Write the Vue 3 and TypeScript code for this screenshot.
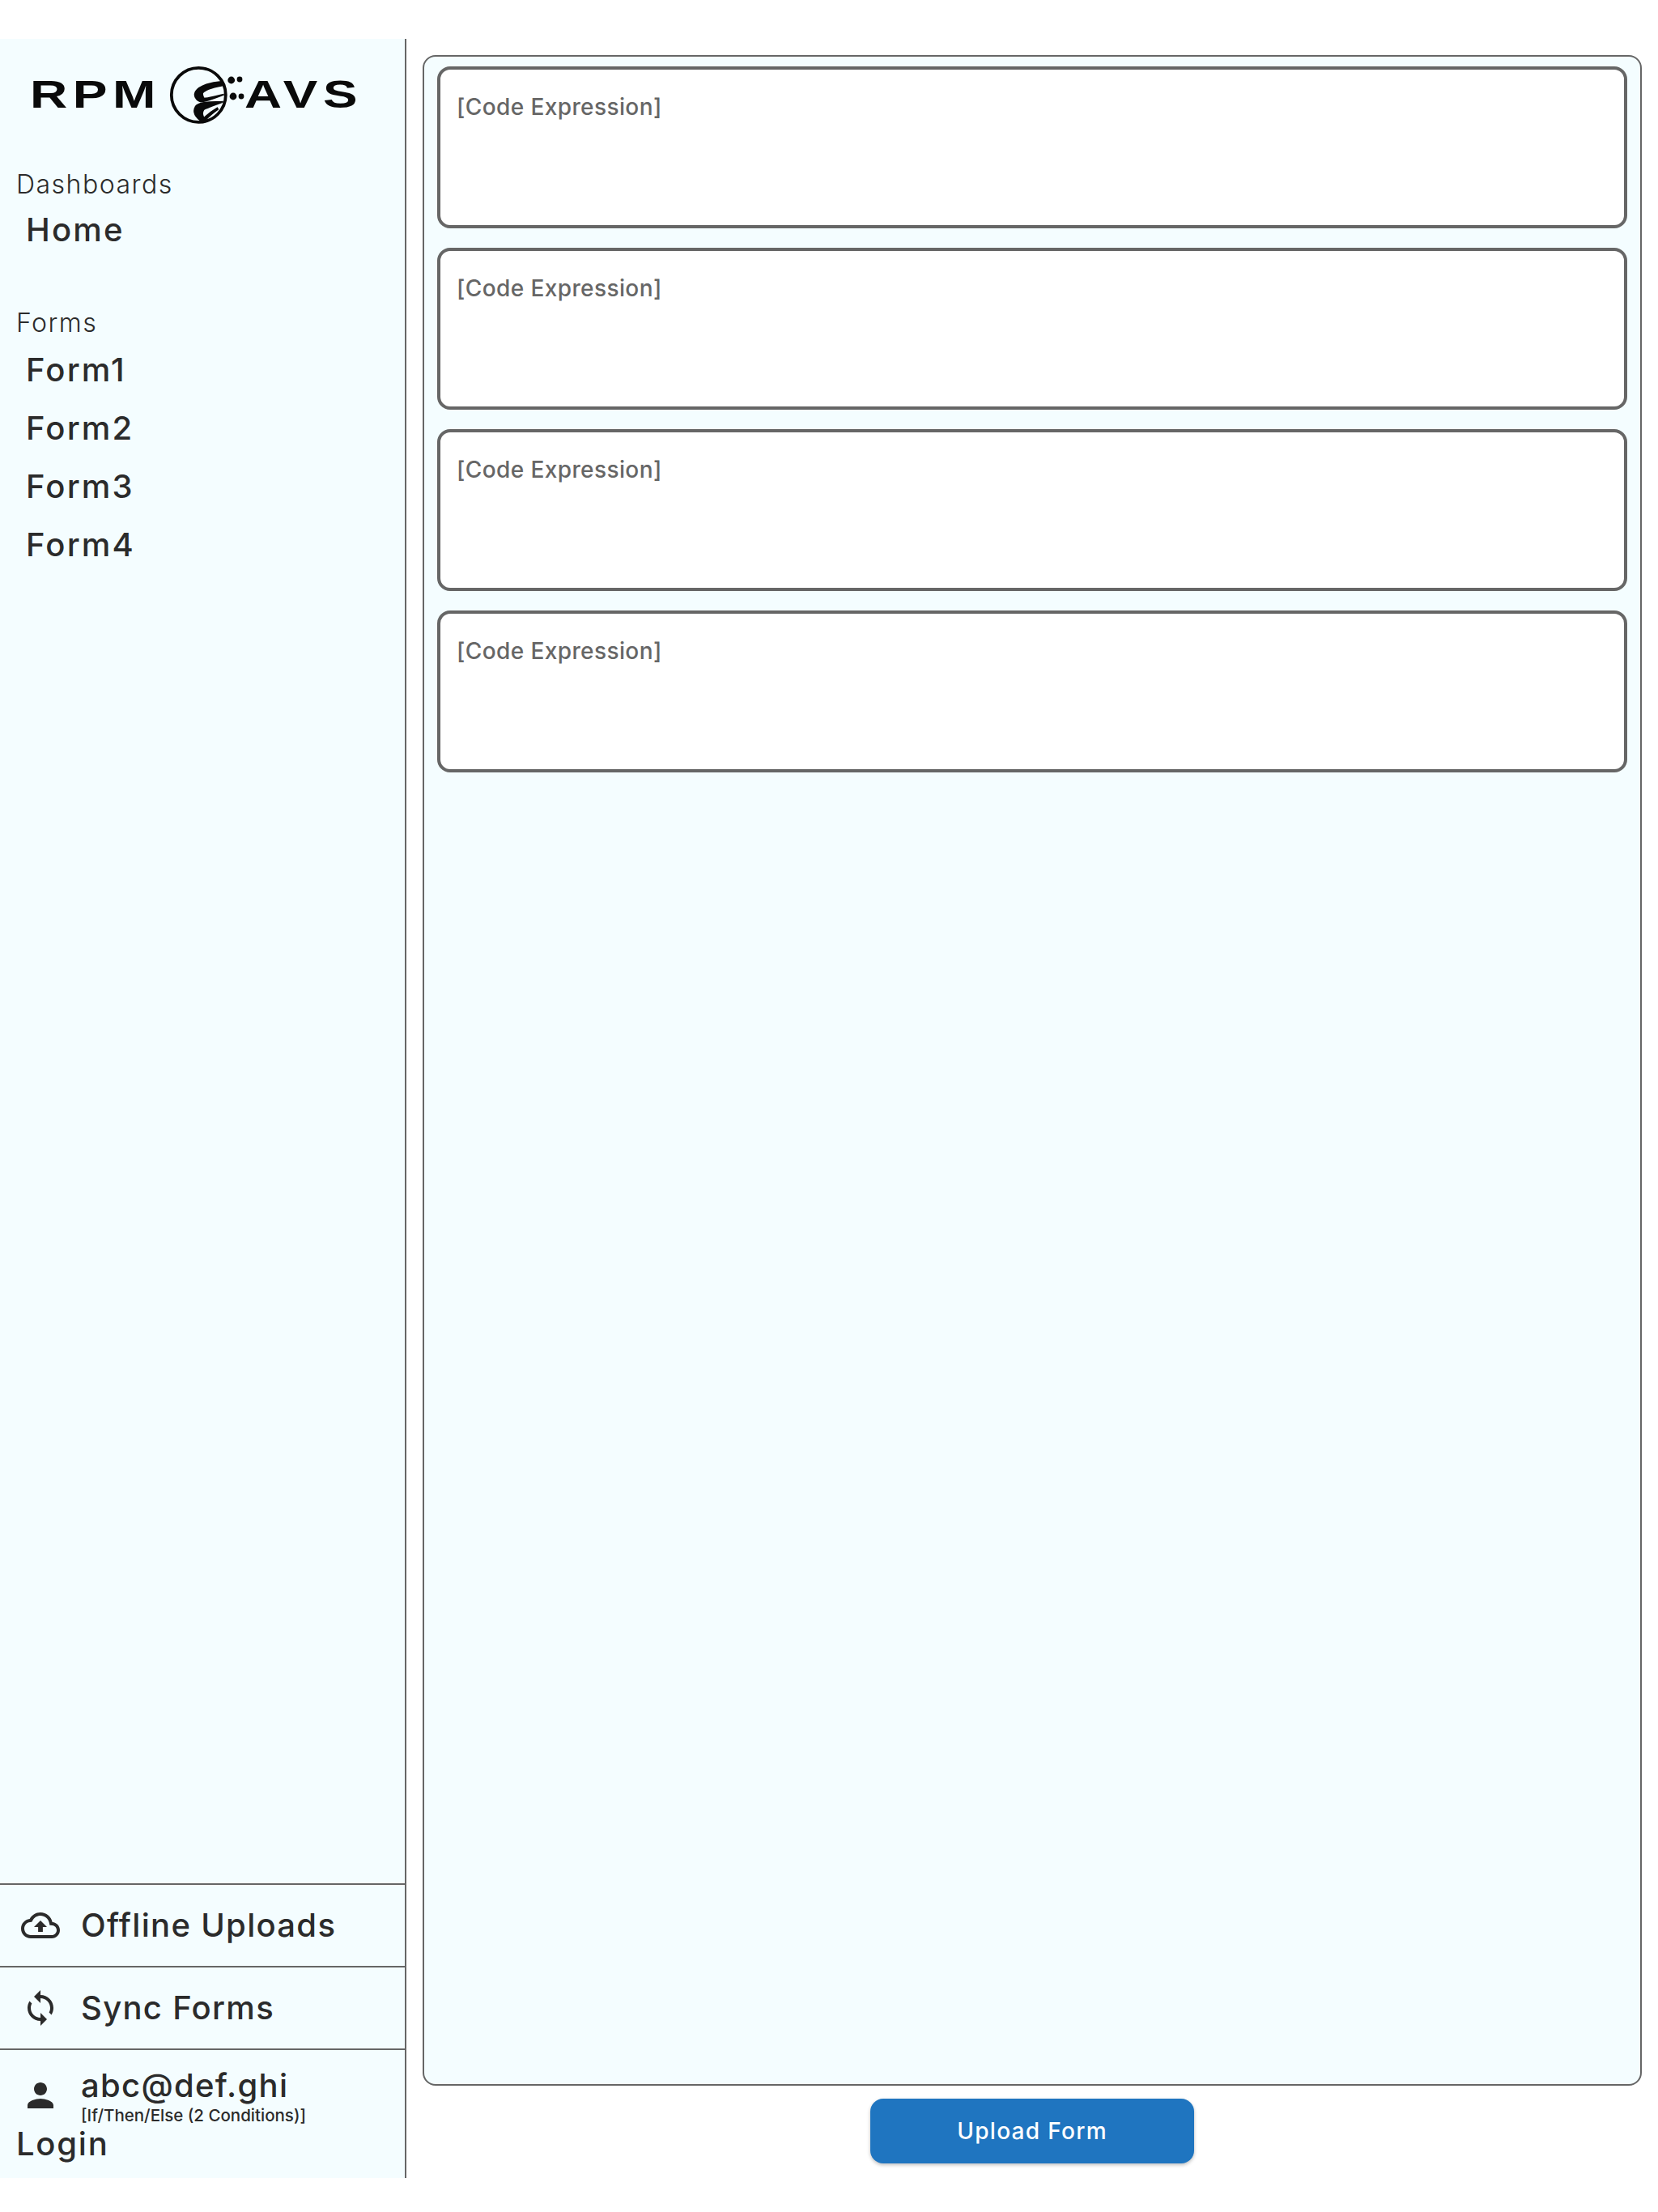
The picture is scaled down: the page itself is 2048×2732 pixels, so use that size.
<script setup lang="ts">
const forms: string[] = ['Form1', 'Form2', 'Form3', 'Form4']
const cards: number[] = [1, 2, 3, 4]
</script>

<template>
  <div class="page">
    <aside class="sidebar">
      <svg class="logo" viewBox="0 0 440 110" width="440" height="110" role="img" aria-label="RPM AVS">
        <text x="17" y="73" class="logo-text" textLength="162" lengthAdjust="spacingAndGlyphs">RPM</text>
        <text x="282" y="73" class="logo-text" textLength="146" lengthAdjust="spacingAndGlyphs">AVS</text>
        <circle cx="225.3" cy="57.3" r="33.5" fill="none" stroke="#0a0a0a" stroke-width="3.8" />
        <g transform="translate(185 15) scale(.3333)" fill="#0a0a0a" stroke="#0a0a0a" stroke-width="6">
          <path d="M205 78C170 80 125 92 110 115C100 135 120 155 140 150C165 145 190 135 215 125C190 130 160 140 140 140C130 120 135 115 150 108C170 98 195 95 212 90Z" />
          <path d="M212 152C180 155 125 150 110 170C98 190 110 210 135 225L150 225C135 210 130 195 140 180C160 170 190 160 212 152Z" />
          <path d="M190 176C170 188 150 203 138 216L146 220C158 206 175 192 192 180Z" />
        </g>
        <circle cx="265.7" cy="39" r="4.4" fill="#0a0a0a" />
        <circle cx="276" cy="38" r="3.4" fill="#0a0a0a" />
        <circle cx="268" cy="59" r="4.4" fill="#0a0a0a" />
        <circle cx="278" cy="59" r="3.4" fill="#0a0a0a" />
      </svg>

      <nav class="nav">
        <div class="section-title">Dashboards</div>
        <a class="nav-item">Home</a>
        <div class="section-title forms-title">Forms</div>
        <a v-for="form in forms" :key="form" class="nav-item">{{ form }}</a>
      </nav>

      <div class="footer">
        <div class="foot-row">
          <svg class="icon" viewBox="0 0 24 24"><path d="M19.35 10.04C18.67 6.59 15.64 4 12 4 9.11 4 6.6 5.64 5.35 8.04 2.34 8.36 0 10.91 0 14c0 3.31 2.69 6 6 6h13c2.76 0 5-2.24 5-5 0-2.64-2.05-4.78-4.65-4.96zM19 18H6c-2.21 0-4-1.79-4-4 0-2.05 1.53-3.76 3.56-3.97l1.07-.11.5-.95C8.08 7.14 9.94 6 12 6c2.62 0 4.88 1.86 5.39 4.43l.3 1.5 1.53.11c1.56.1 2.78 1.41 2.78 2.96 0 1.65-1.35 3-3 3zM8 13h2.55v3h2.9v-3H16l-4-4z" /></svg>
          <span class="foot-label">Offline Uploads</span>
        </div>
        <div class="foot-row">
          <svg class="icon" viewBox="0 0 24 24"><path d="M12 4V1L8 5l4 4V6c3.31 0 6 2.69 6 6 0 1.01-.25 1.97-.7 2.8l1.46 1.46C19.54 15.03 20 13.57 20 12c0-4.42-3.58-8-8-8zm0 14c-3.31 0-6-2.69-6-6 0-1.01.25-1.97.7-2.8L5.24 7.74C4.46 8.97 4 10.43 4 12c0 4.42 3.58 8 8 8v3l4-4-4-4v3z" /></svg>
          <span class="foot-label">Sync Forms</span>
        </div>
        <div class="user-block">
          <div class="user-row">
            <svg class="icon user-icon" viewBox="0 0 24 24"><path d="M12 12c2.21 0 4-1.79 4-4s-1.79-4-4-4-4 1.79-4 4 1.79 4 4 4zm0 2c-2.67 0-8 1.34-8 4v2h16v-2c0-2.66-5.33-4-8-4z" /></svg>
            <div class="user-text">
              <div class="foot-label">abc@def.ghi</div>
              <div class="condition">[If/Then/Else (2 Conditions)]</div>
            </div>
          </div>
          <div class="foot-label login">Login</div>
        </div>
      </div>
    </aside>

    <main class="main">
      <section class="panel">
        <div v-for="card in cards" :key="card" class="card">[Code Expression]</div>
      </section>
      <button class="upload" type="button">Upload Form</button>
    </main>
  </div>
</template>

<style scoped>
.page {
  display: flex;
  width: 2048px;
  height: 2642px;
  padding: 48px 0 42px;
  background: #fff;
  font-family: Inter, "Noto Sans", sans-serif;
  color: #2b2b2b;
}
.sidebar {
  display: flex;
  flex-direction: column;
  width: 502px;
  flex: none;
  box-sizing: border-box;
  background: #f4fdff;
  border-right: 2px solid #666;
}
.logo {
  display: block;
  flex: none;
  margin: 12px 0 0 20px;
}
.logo-text {
  font-family: "Liberation Sans", sans-serif;
  font-weight: 700;
  font-size: 49px;
  letter-spacing: 5px;
  fill: #0a0a0a;
}
.nav {
  display: flex;
  flex-direction: column;
  padding-top: 38px;
  flex: 1;
}
.section-title {
  height: 40px;
  padding-left: 20px;
  font-size: 32px;
  line-height: 40px;
  font-weight: 300;
  letter-spacing: 1.5px;
  color: #2b2b2b;
}
.forms-title {
  margin-top: 59px;
  margin-bottom: 2px;
}
.nav-item {
  height: 72px;
  padding-left: 32px;
  font-size: 40px;
  line-height: 72px;
  font-weight: 500;
  letter-spacing: 2.2px;
  margin-top: -0.5px;
  margin-bottom: 0.5px;
}
.footer {
  flex: none;
}
.foot-row {
  display: flex;
  align-items: center;
  height: 102px;
  box-sizing: border-box;
  padding-left: 26px;
  border-top: 2px solid #666;
}
.icon {
  width: 48px;
  height: 48px;
  flex: none;
  fill: #2b2b2b;
}
.foot-label {
  font-size: 40px;
  font-weight: 500;
  line-height: 48px;
  letter-spacing: 1.3px;
}
.foot-row .foot-label {
  margin-left: 26px;
}
.user-block {
  height: 160px;
  box-sizing: border-box;
  border-top: 2px solid #666;
  padding-top: 20px;
}
.user-row {
  display: flex;
  align-items: flex-start;
  padding-left: 26px;
}
.user-icon {
  margin-top: 12px;
}
.user-text {
  margin-left: 26px;
}
.condition {
  font-size: 20.5px;
  font-weight: 500;
  line-height: 26px;
}
.login {
  padding-left: 20px;
  line-height: 46px;
  margin-top: -1px;
  letter-spacing: 1.75px;
}
.main {
  flex: 1;
  display: flex;
  flex-direction: column;
  align-items: center;
  padding: 20px 20px 18px;
  min-width: 0;
}
.panel {
  flex: 1;
  width: 100%;
  box-sizing: border-box;
  display: flex;
  flex-direction: column;
  gap: 24px;
  padding: 12px 16px;
  background: #f4fdff;
  border: 2px solid #666;
  border-radius: 16px;
}
.card {
  height: 200px;
  box-sizing: border-box;
  padding: 26px 20px;
  background: #fff;
  border: 4px solid #666;
  border-radius: 16px;
  font-size: 28px;
  line-height: 40px;
  font-weight: 500;
  letter-spacing: 0.4px;
  color: #666;
}
.upload {
  flex: none;
  width: 400px;
  height: 80px;
  margin-top: 16px;
  border: 0;
  border-radius: 16px;
  background: #1f75c0;
  box-shadow: 0 2px 4px rgba(0, 0, 0, 0.25);
  color: #fff;
  font-family: inherit;
  font-size: 28px;
  font-weight: 500;
  letter-spacing: 1.3px;
}
</style>
